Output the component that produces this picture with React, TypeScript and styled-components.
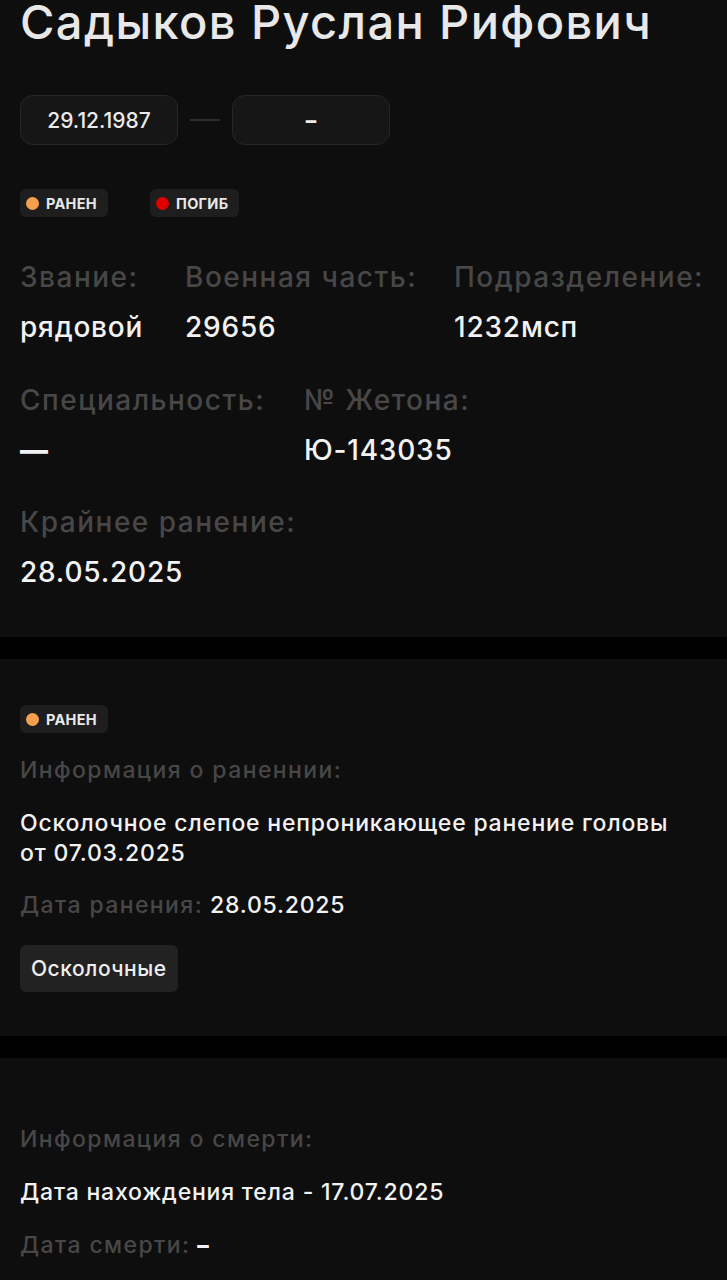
import styled, {createGlobalStyle} from "styled-components";

const GlobalStyle = createGlobalStyle`
  body {
    margin: 0;
    background: #000;
    font-family: Inter, "Noto Sans", sans-serif;
    color: #f2f2f2;
  }
`;

const Page = styled.div`
  display: flex;
  flex-direction: column;
  gap: 22px;
  min-height: 100vh;
  background: #000;
`;

const Section = styled.section<{$pt: number; $pb: number; $grow?: boolean}>`
  background: #0e0e0e;
  padding: ${(p) => p.$pt}px 20px ${(p) => p.$pb}px;
  display: flex;
  flex-direction: column;
  flex-grow: ${(p) => (p.$grow ? 1 : 0)};
`;

const Title = styled.h1`
  margin: -6px 0 0;
  font-size: 47px;
  font-weight: 500;
  line-height: 56px;
  color: #e8e8e8;
  letter-spacing: 1.4px;
  white-space: nowrap;
`;

const DatesRow = styled.div`
  display: flex;
  align-items: center;
  margin-top: 45px;
`;

const DatePill = styled.div`
  width: 158px;
  height: 50px;
  box-sizing: border-box;
  border-radius: 13px;
  background: #161616;
  border: 1px solid #262626;
  display: flex;
  align-items: center;
  justify-content: center;
  font-size: 21px;
  font-weight: 500;
  color: #eaeaea;
`;

const Dash = styled.span`
  font-weight: 800;
`;

const DateDash = styled.div`
  width: 30px;
  height: 2px;
  margin: 0 12px;
  background: #2e2e2e;
`;

const BadgeRow = styled.div`
  display: flex;
  gap: 42px;
  margin-top: 44px;
`;

const Badge = styled.div`
  display: inline-flex;
  align-items: center;
  gap: 7px;
  height: 28px;
  padding: 0 11px 0 6px;
  border-radius: 6px;
  background: #1e1e1e;
  font-size: 14.5px;
  font-weight: 700;
  letter-spacing: 0.3px;
  color: #e8e8e8;
  align-self: flex-start;
`;

const Dot = styled.span<{$color: string}>`
  width: 13px;
  height: 13px;
  border-radius: 50%;
  background: ${(p) => p.$color};
`;

const InfoRow = styled.div<{$cols: string; $mt: number}>`
  display: grid;
  grid-template-columns: ${(p) => p.$cols};
  margin-top: ${(p) => p.$mt}px;
`;

const Field = styled.div`
  display: flex;
  flex-direction: column;
  gap: 14px;
`;

const FieldLabel = styled.div`
  font-size: 28px;
  line-height: 36px;
  font-weight: 500;
  letter-spacing: 1.5px;
  color: #474747;
  white-space: nowrap;
`;

const FieldValue = styled.div`
  font-size: 28px;
  line-height: 36px;
  font-weight: 500;
  letter-spacing: 0.8px;
  color: #f2f2f2;
  white-space: nowrap;
`;

const Caption = styled.div<{$mt: number}>`
  margin-top: ${(p) => p.$mt}px;
  font-size: 23px;
  line-height: 30px;
  font-weight: 500;
  letter-spacing: 1.4px;
  color: #474747;
`;

const Text = styled.div<{$mt: number}>`
  margin-top: ${(p) => p.$mt}px;
  max-width: 665px;
  font-size: 23px;
  line-height: 30px;
  font-weight: 500;
  letter-spacing: 0.8px;
  color: #f2f2f2;
`;

const Muted = styled.span`
  color: #474747;
  letter-spacing: 1.4px;
`;

const Tag = styled.div`
  margin-top: 25px;
  align-self: flex-start;
  padding: 0 11px;
  height: 47px;
  display: flex;
  align-items: center;
  border-radius: 6px;
  background: #222;
  font-size: 21px;
  font-weight: 500;
  letter-spacing: 0.5px;
  color: #eee;
`;

const ORANGE = "#f6a04d";
const RED = "#e10000";

const App = () => {
  return (
    <>
      <GlobalStyle />
      <Page>
        <Section $pt={0} $pb={47}>
          <Title>Садыков Руслан Рифович</Title>
          <DatesRow>
            <DatePill>29.12.1987</DatePill>
            <DateDash />
            <DatePill>
              <Dash>–</Dash>
            </DatePill>
          </DatesRow>
          <BadgeRow>
            <Badge>
              <Dot $color={ORANGE} />
              РАНЕН
            </Badge>
            <Badge>
              <Dot $color={RED} />
              ПОГИБ
            </Badge>
          </BadgeRow>
          <InfoRow $cols="165px 269px auto" $mt={42}>
            <Field>
              <FieldLabel>Звание:</FieldLabel>
              <FieldValue>рядовой</FieldValue>
            </Field>
            <Field>
              <FieldLabel>Военная часть:</FieldLabel>
              <FieldValue>29656</FieldValue>
            </Field>
            <Field>
              <FieldLabel>Подразделение:</FieldLabel>
              <FieldValue>1232мсп</FieldValue>
            </Field>
          </InfoRow>
          <InfoRow $cols="284px auto" $mt={37}>
            <Field>
              <FieldLabel>Специальность:</FieldLabel>
              <FieldValue>
                <Dash>—</Dash>
              </FieldValue>
            </Field>
            <Field>
              <FieldLabel>№ Жетона:</FieldLabel>
              <FieldValue>Ю-143035</FieldValue>
            </Field>
          </InfoRow>
          <InfoRow $cols="auto" $mt={36}>
            <Field>
              <FieldLabel>Крайнее ранение:</FieldLabel>
              <FieldValue>28.05.2025</FieldValue>
            </Field>
          </InfoRow>
        </Section>
        <Section $pt={46} $pb={44}>
          <Badge>
            <Dot $color={ORANGE} />
            РАНЕН
          </Badge>
          <Caption $mt={22}>Информация о раненнии:</Caption>
          <Text $mt={23}>
            Осколочное слепое непроникающее ранение головы от 07.03.2025
          </Text>
          <Text $mt={22}>
            <Muted>Дата ранения:</Muted> 28.05.2025
          </Text>
          <Tag>Осколочные</Tag>
        </Section>
        <Section $pt={66} $pb={40} $grow>
          <Caption $mt={0}>Информация о смерти:</Caption>
          <Text $mt={23}>Дата нахождения тела - 17.07.2025</Text>
          <Text $mt={23}>
            <Muted>Дата смерти:</Muted> <Dash>–</Dash>
          </Text>
        </Section>
      </Page>
    </>
  );
};

export default App;
